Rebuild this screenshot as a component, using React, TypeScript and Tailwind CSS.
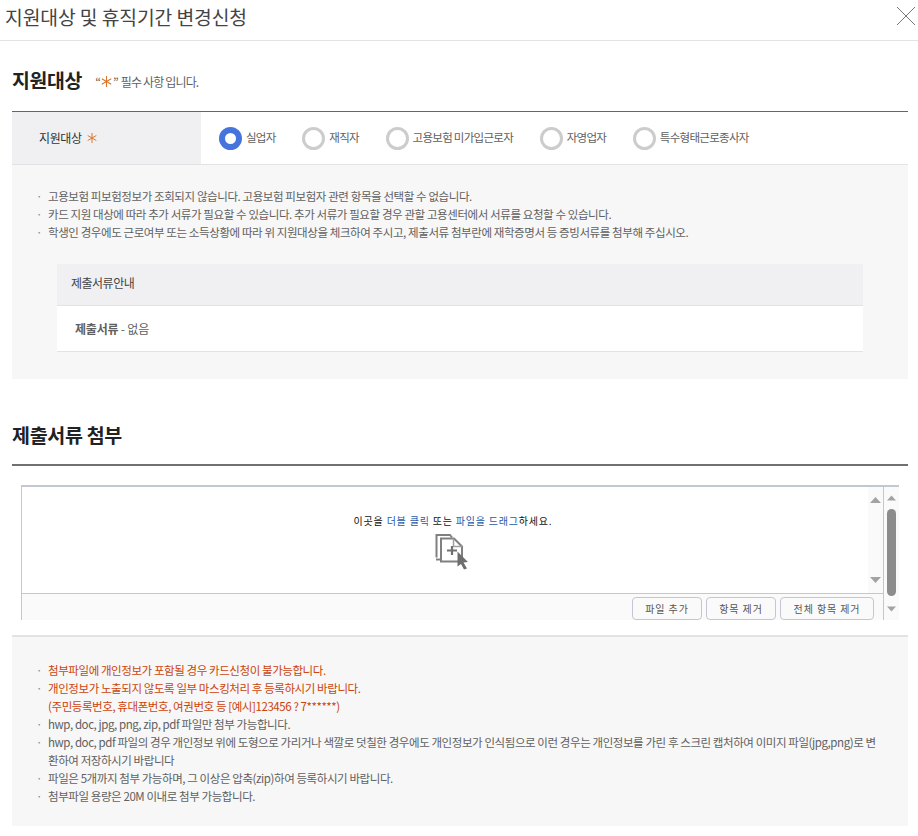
const FONT = "font-['Noto_Sans_CJK_KR','Noto_Sans',sans-serif]";

const targets = [
  { label: "실업자", checked: true },
  { label: "재직자" },
  { label: "고용보험 미가입근로자" },
  { label: "자영업자" },
  { label: "특수형태근로종사자" },
];

const noticeTop = [
  "고용보험 피보험정보가 조회되지 않습니다. 고용보험 피보험자 관련 항목을 선택할 수 없습니다.",
  "카드 지원 대상에 따라 추가 서류가 필요할 수 있습니다. 추가 서류가 필요할 경우 관할 고용센터에서 서류를 요청할 수 있습니다.",
  "학생인 경우에도 근로여부 또는 소득상황에 따라 위 지원대상을 체크하여 주시고, 제출서류 첨부란에 재학증명서 등 증빙서류를 첨부해 주십시오.",
];

function Bullet({ children, red }: { children: React.ReactNode; red?: boolean }) {
  return (
    <li className={`relative break-all pl-[36px] pr-[28px] ${red ? "text-[#cc430c]" : "text-[#606060]"}`}>
      <span className="absolute left-[24px] top-0 text-[#888888]">·</span>
      {children}
    </li>
  );
}

function Arrow({ up, className = "" }: { up?: boolean; className?: string }) {
  return (
    <svg width="11" height="6" viewBox="0 0 11 6" className={className}>
      <path d={up ? "M5.5 0 L11 6 L0 6 Z" : "M0 0 L11 0 L5.5 6 Z"} fill="#a3a3a3" />
    </svg>
  );
}

function Star({ size = 10 }: { size?: number }) {
  return (
    <svg width={size} height={size} viewBox="0 0 10 10" className="inline-block">
      <path d="M5 0 V10 M0.7 2.5 L9.3 7.5 M9.3 2.5 L0.7 7.5" stroke="#d9772e" strokeWidth="1" />
    </svg>
  );
}

function UploadIcon() {
  return (
    <svg width="34" height="37" viewBox="0 0 34 36" className="mr-[2px] mt-[5px]">
      <path d="M1.5 24 V1.5 H15 L17 4" fill="none" stroke="#808080" strokeWidth="2" />
      <path d="M1 26 H6" fill="none" stroke="#808080" strokeWidth="2" />
      <path d="M6 5 H19 L27 13 V28 H6 Z" fill="white" stroke="#808080" strokeWidth="2" />
      <path d="M18.5 5 V13 H27" fill="none" stroke="#a0a0a0" strokeWidth="1.5" />
      <path d="M12 17 H22 M17 12.5 V21.5" stroke="#707070" strokeWidth="2.2" />
      <path d="M22.5 18 L33 28.5 L28.5 29 L32 35 L29 36 L26 30.5 L22.5 33 Z" fill="#6e6e6e" />
    </svg>
  );
}

export default function App() {
  return (
    <div className={`h-[836px] w-[918px] overflow-hidden bg-white ${FONT}`}>
      <header className="flex h-[41px] items-center justify-between border-b border-[#e3e3e3] pl-[5px] pr-[2px]">
        <h1 className="pb-[6px] text-[19.3px] leading-[32px] tracking-[-0.1px] text-[#444444]">
          지원대상 및 휴직기간 변경신청
        </h1>
        <svg width="20" height="20" viewBox="0 0 20 20" className="mb-[8px]">
          <path d="M1 1 L19 19 M19 1 L1 19" stroke="#777777" strokeWidth="1" />
        </svg>
      </header>

      <main className="pl-[12px] pr-[10px]">
        <div className="flex h-[70px] items-center pt-[8px]">
          <h2 className="text-[19.4px] font-bold tracking-[-0.3px] text-[#222222]">지원대상</h2>
          <p className="ml-[13px] mt-[3px] flex items-center text-[12px] tracking-[-0.85px] text-[#5f5f5f]">
            <span>“</span>
            <span className="mx-px flex"><Star size={11} /></span>
            <span className="mr-[3px]">”</span>
            <span>필수 사항 입니다.</span>
          </p>
        </div>

        <section className="border-t border-[#666666]">
          <div className="flex h-[53px] border-b border-[#e3e3e3]">
            <div className="flex w-[189px] items-center bg-[#f0f0f2] pl-[27px] text-[12px] tracking-[-0.4px] text-[#333333]">
              지원대상 <span className="ml-[5px] flex"><Star /></span>
            </div>
            <div className="flex items-center pl-[18px] text-[11.5px] tracking-[-0.72px] text-[#606060]">
              {targets.map((t) => (
                <label key={t.label} className="mr-[26.7px] flex items-center">
                  <span
                    className={
                      t.checked
                        ? "mr-[4px] h-[23px] w-[23px] rounded-full border-[6px] border-[#4474dc] bg-white"
                        : "mr-[4px] h-[23px] w-[23px] rounded-full border-[3px] border-[#cccccc] bg-white"
                    }
                  />
                  {t.label}
                </label>
              ))}
            </div>
          </div>

          <div className="h-[214px] bg-[#f7f7f7] pt-[22px]">
            <ul className="text-[11.5px] leading-[18px] tracking-[-0.41px]">
              {noticeTop.map((line) => (
                <Bullet key={line}>{line}</Bullet>
              ))}
            </ul>
            <div className="mx-[45px] mt-[23px]">
              <div className="flex h-[42px] items-center border-b border-[#e3e3e3] bg-[#f0f0f2] pb-[3px] pl-[14px] text-[12px] tracking-[-0.5px] text-[#444444]">
                제출서류안내
              </div>
              <div className="flex h-[46px] items-center border-b border-[#e3e3e3] bg-white pl-[18px] text-[12px] tracking-[-0.2px] text-[#606060]">
                <strong className="font-bold">제출서류</strong>&nbsp;- 없음
              </div>
            </div>
          </div>
        </section>

        <h2 className="flex h-[85px] items-end pb-[15px] text-[19.5px] font-bold tracking-[-0.3px] text-[#222222]">
          제출서류 첨부
        </h2>
        <div className="h-[2px] bg-[#707070]" />

        <section className="ml-[9px] mt-[19px] flex h-[135px] w-[878px] overflow-hidden">
          <div className="flex w-[863px] flex-col border-l border-r border-t-2 border-[#c3c6d3]">
            <div className="flex h-[107px] border-b border-[#c3c6d3]">
              <div className="flex flex-1 flex-col items-center pl-[16px] pt-[27px]">
                <p className="text-[10px] leading-[14px] tracking-[0.8px] text-[#111111]">
                  이곳을 <span className="text-[#1f5aa8]">더블 클릭</span> 또는{" "}
                  <span className="text-[#1f5aa8]">파일을 드래그</span>하세요.
                </p>
                <UploadIcon />
              </div>
              <div className="flex w-[15px] flex-col items-center justify-between bg-[#fafafa] py-[10px]">
                <Arrow up />
                <Arrow />
              </div>
            </div>
            <div className="flex flex-1 items-start justify-end gap-[4px] bg-[#fafafa] pr-[9px] pt-[3px] text-[10px] tracking-[0.9px] text-[#555555]">
              <button className="h-[23px] w-[70px] rounded-[4px] border border-[#c3c6d3] bg-[#fafafa]">파일 추가</button>
              <button className="h-[23px] w-[70px] rounded-[4px] border border-[#c3c6d3] bg-[#fafafa]">항목 제거</button>
              <button className="h-[23px] w-[94px] rounded-[4px] border border-[#c3c6d3] bg-[#fafafa]">전체 항목 제거</button>
            </div>
          </div>
          <div className="flex w-[15px] flex-col items-center border-t-2 border-[#c3c6d3] bg-[#fafafa] pt-[8px]">
            <Arrow up className="w-[9px]" />
            <div className="mt-[8px] h-[87px] w-[9px] rounded-full bg-[#8c8c8c]" />
            <Arrow className="mt-[10px] w-[9px]" />
          </div>
        </section>

        <section className="mt-[15px] h-[191px] border-t-2 border-[#e3e3e3] bg-[#f7f7f7] pt-[24px]">
          <ul className="text-[11.5px] leading-[18px] tracking-[-0.42px]">
            <Bullet red>첨부파일에 개인정보가 포함될 경우 카드신청이 불가능합니다.</Bullet>
            <Bullet red>
              개인정보가 노출되지 않도록 일부 마스킹처리 후 등록하시기 바랍니다.
              <br />
              (주민등록번호, 휴대폰번호, 여권번호 등 [예시]123456 ? 7******)
            </Bullet>
            <Bullet>hwp, doc, jpg, png, zip, pdf 파일만 첨부 가능합니다.</Bullet>
            <Bullet>
              hwp, doc, pdf 파일의 경우 개인정보 위에 도형으로 가리거나 색깔로 덧칠한 경우에도 개인정보가 인식됨으로 이런 경우는 개인정보를 가린 후 스크린 캡처하여 이미지 파일(jpg,png)로 변환하여 저장하시기 바랍니다
            </Bullet>
            <Bullet>파일은 5개까지 첨부 가능하며, 그 이상은 압축(zip)하여 등록하시기 바랍니다.</Bullet>
            <Bullet>첨부파일 용량은 20M 이내로 첨부 가능합니다.</Bullet>
          </ul>
        </section>
      </main>
    </div>
  );
}
